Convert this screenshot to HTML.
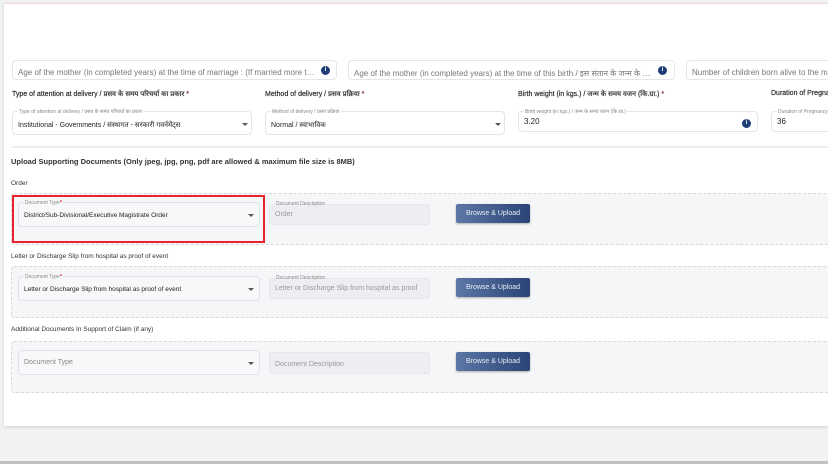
<!DOCTYPE html>
<html><head><meta charset="utf-8"><style>
*{box-sizing:border-box;margin:0;padding:0}
body{width:828px;height:464px;overflow:hidden;background:#f1f2f4;font-family:"Liberation Sans","Noto Sans CJK SC",sans-serif;position:relative;color:#333}
.a{position:absolute}
.card{left:4px;top:3px;width:830px;height:423px;background:#fff;border-top:1px solid #f6d6dc;box-shadow:0 1px 3px rgba(0,0,0,.15)}
.in{position:absolute;background:#fff;border:1px solid #e3e5e8;border-radius:4px}
.ph{position:absolute;font-size:8px;color:#777;white-space:nowrap;overflow:hidden;text-overflow:ellipsis}
.lbl{position:absolute;font-size:7px;color:#222;white-space:nowrap;font-weight:500;-webkit-text-stroke:0.15px #222}
.lbl b{color:#d22;font-weight:normal}
.fl{position:absolute;font-size:5px;color:#888;top:-3px;left:5px;background:#fff;padding:0 1px;white-space:nowrap}
.val{position:absolute;font-size:7px;color:#222;white-space:nowrap;left:5px}
.car{position:absolute;width:0;height:0;border-left:3px solid transparent;border-right:3px solid transparent;border-top:3px solid #555}
.info{position:absolute;width:9px;height:9px;border-radius:50%;background:#1f3e78;color:#fff;font-size:6px;text-align:center;line-height:9px;font-weight:bold}
.box{position:absolute;left:11px;width:820px;background:#f5f6f8;border:1px dashed #d8d9dc;border-radius:3px}
.sel{position:absolute;background:#f7f8fa;border:1px solid #e1e3e6;border-radius:4px}
.desc{position:absolute;background:#eceef1;border:1px solid #e6e7ea;border-radius:3px}
.btn{position:absolute;width:74px;height:19px;background:linear-gradient(90deg,#5c77a5,#2a4576);border-radius:2px;color:#e8ecf4;font-size:7px;text-align:center;line-height:19px;box-shadow:0 1px 2px rgba(0,0,0,.3)}
.h{position:absolute;font-size:7px;color:#333;white-space:nowrap}
</style></head><body>
<div class="a card"></div>
<div class="in" style="left:12px;top:60px;width:325px;height:20px"><span class="ph" style="left:5px;top:7px;width:300px">Age of the mother (in completed years) at the time of marriage : (If married more than once)</span><span class="info" style="left:308px;top:5px">i</span></div>
<div class="in" style="left:348px;top:60px;width:327px;height:20px"><span class="ph" style="left:5px;top:7px;width:300px">Age of the mother (in completed years) at the time of this birth / इस संतान के जन्म के समय माता की आयु</span><span class="info" style="left:309px;top:5px">i</span></div>
<div class="in" style="left:686px;top:60px;width:150px;height:20px"><span class="ph" style="left:5px;top:7px">Number of children born alive to the mother</span></div>

<div class="lbl" style="left:12px;top:90px">Type of attention at delivery / प्रसव के समय परिचर्या का प्रकार <b>*</b></div>
<div class="lbl" style="left:265px;top:90px">Method of delivery / प्रसव प्रक्रिया <b>*</b></div>
<div class="lbl" style="left:518px;top:90px">Birth weight (in kgs.) / जन्म के समय वजन (कि.ग्रा.) <b>*</b></div>
<div class="lbl" style="left:771px;top:90px">Duration of Pregnancy</div>

<div class="in" style="left:12px;top:111px;width:240px;height:24px"><span class="fl">Type of attention at delivery / प्रसव के समय परिचर्या का प्रकार</span><span class="val" style="top:9px">Institutional - Govemments / संस्थागत - सरकारी गवर्नमेंट्स</span><span class="car" style="left:229px;top:11px"></span></div>
<div class="in" style="left:265px;top:111px;width:240px;height:24px"><span class="fl">Method of delivery / प्रसव प्रक्रिया</span><span class="val" style="top:9px">Normal / स्वाभाविक</span><span class="car" style="left:229px;top:11px"></span></div>
<div class="in" style="left:518px;top:111px;width:240px;height:21px"><span class="fl">Birth weight (in kgs.) / जन्म के समय वजन (कि.ग्रा.)</span><span class="val" style="top:5px;font-size:8px">3.20</span><span class="info" style="left:223px;top:7px">i</span></div>
<div class="in" style="left:771px;top:111px;width:70px;height:21px"><span class="fl">Duration of Pregnancy</span><span class="val" style="top:5px;font-size:8px">36</span></div>

<div class="a" style="left:12px;top:146px;width:820px;height:2px;background:#eceef0"></div>

<div class="h" style="left:11px;top:157px;font-size:7.5px;font-weight:bold;color:#333">Upload Supporting Documents (Only jpeg, jpg, png, pdf are allowed &amp; maximum file size is 8MB)</div>
<div class="h" style="left:11px;top:180px;font-size:6.5px">Order</div>

<div class="box" style="top:193px;height:52px"></div>
<div class="a" style="left:12px;top:195px;width:253px;height:48px;border:2px solid #e8232b"></div>
<div class="sel" style="left:18px;top:202px;width:242px;height:25px"><span class="fl" style="background:#f7f8fa">Document Type<b style="color:#d22">*</b></span><span class="val" style="top:9px;font-size:6.5px">District/Sub-Divisional/Executive Magistrate Order</span><span class="car" style="left:229px;top:11px"></span></div>
<div class="desc" style="left:269px;top:204px;width:161px;height:21px"><span class="fl" style="background:transparent;top:-4px">Document Description</span><span class="val" style="top:6px;color:#999">Order</span></div>
<div class="btn" style="left:456px;top:204px">Browse &amp; Upload</div>

<div class="h" style="left:11px;top:253px;font-size:6.5px">Letter or Discharge Slip from hospital as proof of event</div>
<div class="box" style="top:266px;height:52px"></div>
<div class="sel" style="left:18px;top:276px;width:242px;height:25px"><span class="fl" style="background:#f7f8fa">Document Type<b style="color:#d22">*</b></span><span class="val" style="top:9px;font-size:6.5px">Letter or Discharge Slip from hospital as proof of event</span><span class="car" style="left:229px;top:11px"></span></div>
<div class="desc" style="left:269px;top:278px;width:161px;height:21px"><span class="fl" style="background:transparent;top:-4px">Document Description</span><span class="val" style="top:6px;color:#999">Letter or Discharge Slip from hospital as proof</span></div>
<div class="btn" style="left:456px;top:278px">Browse &amp; Upload</div>

<div class="h" style="left:11px;top:326px;font-size:6.5px">Additional Documents In Support of Claim (if any)</div>
<div class="box" style="top:341px;height:52px"></div>
<div class="sel" style="left:18px;top:350px;width:242px;height:25px"><span class="val" style="top:8px;font-size:7px;color:#888">Document Type</span><span class="car" style="left:229px;top:11px"></span></div>
<div class="desc" style="left:269px;top:352px;width:161px;height:22px"><span class="val" style="top:8px;color:#999">Document Description</span></div>
<div class="btn" style="left:456px;top:352px">Browse &amp; Upload</div>

<div class="a" style="left:0;top:461px;width:828px;height:3px;background:#bfc0c2"></div>
</body></html>
